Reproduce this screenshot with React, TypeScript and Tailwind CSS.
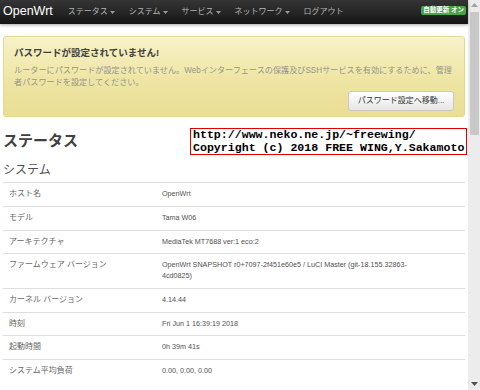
import React from 'react';

const NAV_ITEMS = [
  { label: 'ステータス', caret: true },
  { label: 'システム', caret: true },
  { label: 'サービス', caret: true },
  { label: 'ネットワーク', caret: true },
  { label: 'ログアウト', caret: false },
];

const ROWS: { label: string; value: React.ReactNode }[] = [
  { label: 'ホスト名', value: 'OpenWrt' },
  { label: 'モデル', value: 'Tama W06' },
  { label: 'アーキテクチャ', value: 'MediaTek MT7688 ver:1 eco:2' },
  {
    label: 'ファームウェア バージョン',
    value: (
      <>
        OpenWrt SNAPSHOT r0+7097-2f451e60e5 / LuCI Master (git-18.155.32863-
        <br />
        4cd0825)
      </>
    ),
  },
  { label: 'カーネル バージョン', value: '4.14.44' },
  { label: '時刻', value: 'Fri Jun 1 16:39:19 2018' },
  { label: '起動時間', value: '0h 39m 41s' },
  { label: 'システム平均負荷', value: '0.00, 0.00, 0.00' },
];

const font = "font-['Liberation_Sans','Noto_Sans_CJK_JP',sans-serif]";

const Caret = () => (
  <svg width="5" height="3" viewBox="0 0 5 3" className="ml-[2px] mt-[1px]">
    <path d="M0 0 L5 0 L2.5 3 Z" fill="#9a9a9a" />
  </svg>
);

const Navbar = () => (
  <div className="h-[24px] flex items-center bg-gradient-to-b from-[#353535] via-[#262626] to-[#151515] shadow-[0_1px_3px_rgba(0,0,0,0.35)]">
    <span className="ml-[3px] mb-[2px] text-[12.5px] text-white leading-none">OpenWrt</span>
    <div className="ml-[8px] mb-[1px] flex items-center">
      {NAV_ITEMS.map(item => (
        <div key={item.label} className="flex items-center px-[7px] text-[8px] text-[#b5b5b5] leading-none">
          {item.label}
          {item.caret && <Caret />}
        </div>
      ))}
    </div>
    <span className="ml-auto mr-[2px] mb-[3px] px-[2px] h-[9px] flex items-center rounded-[2px] bg-[#46a546] text-[6.5px] font-bold text-white leading-none">
      自動更新 オン
    </span>
  </div>
);

const Alert = () => (
  <div className="mt-[12px] rounded-[3px] border border-[#e5d88f] bg-gradient-to-b from-[#f7f2c9] via-[#efe6a6] to-[#e9de94] pt-[9px] px-[10px] pb-[5px]">
    <div className="text-[9.5px] leading-[14px] font-bold text-[#404040]">パスワードが設定されていません!</div>
    <div className="mt-[5px] text-[8.15px] leading-[11.5px] text-[#94948a] whitespace-nowrap">
      <div>ルーターにパスワードが設定されていません。Webインターフェースの保護及びSSHサービスを有効にするために、管理</div>
      <div>者パスワードを設定してください。</div>
    </div>
    <div className="mt-[3px] flex justify-end">
      <button className="w-[106px] h-[20px] rounded-[3px] border border-[#c8c8c8] bg-gradient-to-b from-white to-[#e6e6e6] text-[8px] text-[#333] leading-none flex items-center justify-center">
        パスワード設定へ移動...
      </button>
    </div>
  </div>
);

const Scrollbar = () => (
  <div className="w-[12px] h-full bg-[#ececec] flex flex-col items-center">
    <svg width="7" height="4" viewBox="0 0 7 4" className="mt-[3px]">
      <path d="M0 4 L7 4 L3.5 0 Z" fill="#a3a3a3" />
    </svg>
    <div className="mt-[5px] w-[9px] h-[123px] bg-[#c8c8c8]" />
    <svg width="7" height="4" viewBox="0 0 7 4" className="mt-auto mb-[4px]">
      <path d="M0 0 L7 0 L3.5 4 Z" fill="#505050" />
    </svg>
  </div>
);

export default function App() {
  return (
    <div className={`w-[480px] h-[390px] overflow-hidden flex bg-white ${font}`}>
      <div className="relative w-[468px] h-full">
        <Navbar />
        <div className="px-[3px]">
          <Alert />
          <h2 className="mt-[14px] text-[15px] leading-[20px] font-bold text-[#404040]">ステータス</h2>
          <h3 className="mt-[11px] text-[12px] leading-[16px] text-[#505050]">システム</h3>
          <div className="mt-[4px]">
            {ROWS.map(row => (
              <div key={row.label} className="grid grid-cols-[159px_1fr] border-t border-[#dedede] py-[6px] leading-[10.75px]">
                <div className="pl-[6px] text-[8px] text-[#666]">{row.label}</div>
                <div className="text-[7.2px] text-[#505050]">{row.value}</div>
              </div>
            ))}
          </div>
        </div>
        <div className="absolute left-[190px] top-[128px] w-[277px] h-[27px] border border-[#e00000] bg-white pl-[2px] font-['Liberation_Mono',monospace] text-[11.6px] font-bold leading-[12.5px] text-black whitespace-nowrap">
          <div>http://www.neko.ne.jp/~freewing/</div>
          <div>Copyright (c) 2018 FREE WING,Y.Sakamoto</div>
        </div>
      </div>
      <Scrollbar />
    </div>
  );
}
